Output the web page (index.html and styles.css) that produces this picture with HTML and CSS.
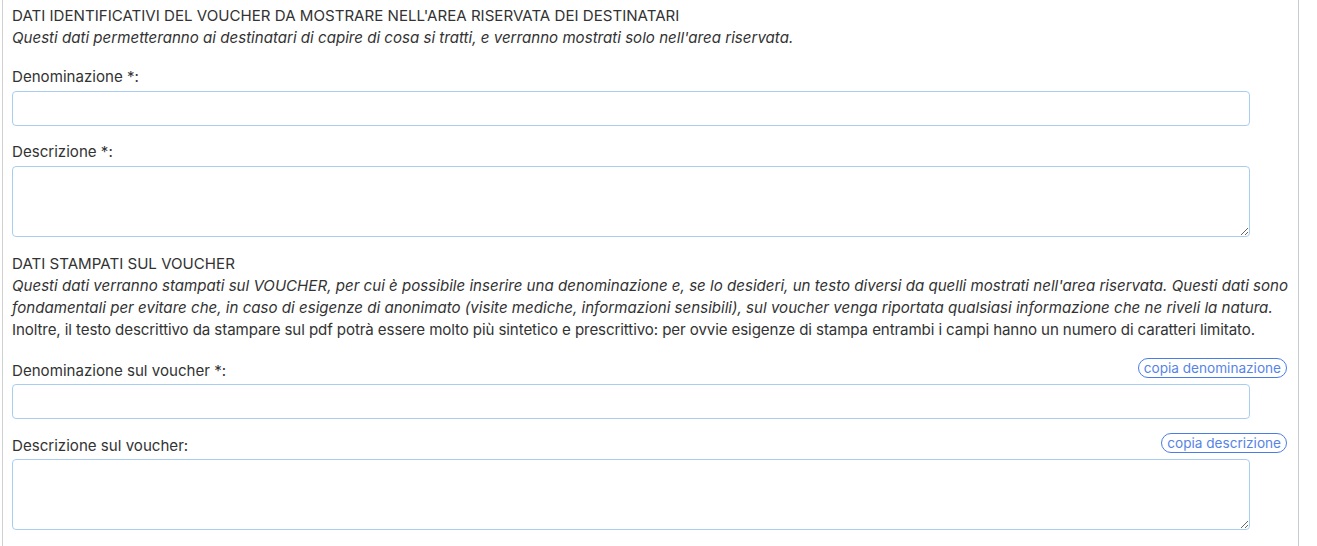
FILE: index.html
```html
<!DOCTYPE html>
<html lang="it">
<head>
<meta charset="utf-8">
<title>Voucher</title>
<link rel="stylesheet" href="styles.css">
</head>
<body>
<div class="panel">
  <div class="section">
    <div class="heading">DATI IDENTIFICATIVI DEL VOUCHER DA MOSTRARE NELL'AREA RISERVATA DEI DESTINATARI</div>
    <div class="note"><em>Questi dati permetteranno ai destinatari di capire di cosa si tratti, e verranno mostrati solo nell'area riservata.</em></div>
  </div>
  <div class="field first">
    <div class="label-row"><label>Denominazione *:</label></div>
    <input class="control" type="text">
  </div>
  <div class="field">
    <div class="label-row"><label>Descrizione *:</label></div>
    <textarea class="control area"></textarea>
  </div>
  <div class="section second">
    <div class="heading">DATI STAMPATI SUL VOUCHER</div>
    <div class="note wide"><em>Questi dati verranno stampati sul VOUCHER, per cui è possibile inserire una denominazione e, se lo desideri, un testo diversi da quelli mostrati nell'area riservata. Questi dati sono fondamentali per evitare che, in caso di esigenze di anonimato (visite mediche, informazioni sensibili), sul voucher venga riportata qualsiasi informazione che ne riveli la natura.</em><br><span class="plain">Inoltre, il testo descrittivo da stampare sul pdf potrà essere molto più sintetico e prescrittivo: per ovvie esigenze di stampa entrambi i campi hanno un numero di caratteri limitato.</span></div>
  </div>
  <div class="field third">
    <div class="label-row"><label>Denominazione sul voucher *:</label><button class="copy" type="button">copia denominazione</button></div>
    <input class="control" type="text">
  </div>
  <div class="field fourth">
    <div class="label-row"><label>Descrizione sul voucher:</label><button class="copy" type="button">copia descrizione</button></div>
    <textarea class="control area"></textarea>
  </div>
</div>
</body>
</html>
```
FILE: styles.css
```css
html, body {
  margin: 0;
  padding: 0;
  background: #ffffff;
}
body {
  font-family: "Inter", "Liberation Sans", Arial, sans-serif;
  font-size: 15.1px;
  line-height: 22px;
  color: #333333;
}
.panel {
  margin-left: 2px;
  width: 1276px;
  padding: 4px 10px 16px 9px;
  border-left: 1px solid #cfcfcf;
  border-right: 1px solid #c5ccd6;
}
.section .heading {
  line-height: 23px;
}
.section.second .heading {
  line-height: 22px;
}
.note em {
  font-style: italic;
}
.note.wide {
  margin-right: -10px;
}
.note .plain {
  letter-spacing: -0.1px;
}
.section.second {
  margin-top: 16px;
}
.field {
  margin-top: 15px;
}
.field.first {
  margin-top: 17px;
}
.field.third {
  margin-top: 17px;
}
.field.fourth {
  margin-top: 14px;
}
.label-row {
  display: flex;
  align-items: flex-start;
  justify-content: space-between;
  margin-bottom: 3px;
}
.label-row label {
  line-height: 22px;
}
.field.third .label-row,
.field.fourth .label-row {
  margin-bottom: 2px;
}
.field.third label,
.field.fourth label {
  margin-top: 2px;
}
.copy {
  font-family: "Inter", "Liberation Sans", Arial, sans-serif;
  font-size: 13.6px;
  line-height: 18px;
  height: 20px;
  color: #5684e6;
  background: #ffffff;
  border: 1px solid #4a7de6;
  border-radius: 10px;
  padding: 0 5px;
  margin: 0 1px 0 0;
  cursor: pointer;
}
.control {
  display: block;
  box-sizing: border-box;
  width: 1238px;
  height: 35px;
  margin: 0;
  padding: 6px 8px;
  border: 1px solid #a9cdf2;
  border-radius: 4px;
  background: #ffffff;
  font-family: "Inter", "Liberation Sans", Arial, sans-serif;
  font-size: 14px;
}
.control.area {
  height: 71px;
  resize: vertical;
}
```
